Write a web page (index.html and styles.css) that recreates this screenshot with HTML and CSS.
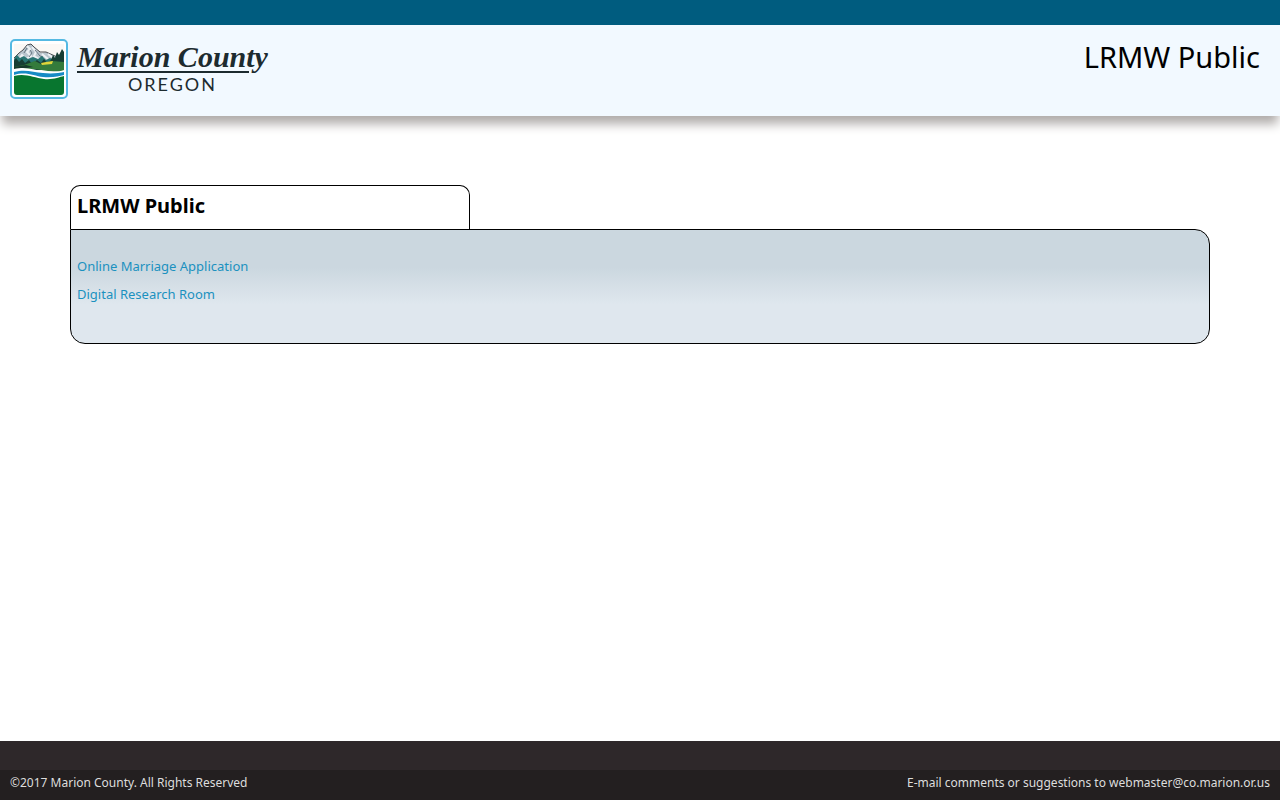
FILE: index.html
```html
<!DOCTYPE html>
<html lang="en">
<head>
  <meta charset="utf-8">
  <meta name="viewport" content="width=device-width, initial-scale=1">
  <title>LRMW Public</title>
  <link rel="stylesheet" href="styles.css">
</head>
<body>
  <header class="site-header">
    <div class="brand">
      <svg class="brand-mark" viewBox="0 0 58 60" aria-hidden="true">
        <rect x="1" y="1" width="56" height="58" rx="4" fill="#fff" stroke="#55b9e2" stroke-width="2"/>
        <path d="M4 5H54V36H4Z" fill="#fbf8f5"/>
        <path d="M4 19L9 14L13 11L17 6L21 5L25 9L31 14L36 13L44 17L53 22V31H4Z" fill="#b9c5ce"/>
        <path d="M4 19L9 14L13 11L17 6L21 5L24 8L30 13L36 13L45 17L52 20" fill="none" stroke="#4a4d51"/>
        <path d="M17 7L20 10L17 13L21 17L16 20L12 16L9 20M22 8L26 13L24 17L29 20M32 15L38 20M38 15L46 21" fill="none" stroke="#eef1f4" stroke-width="2"/>
        <path d="M17 9L14 14M20 11L22 14L19 18M25 11L30 17L33 18" fill="none" stroke="#687783"/>
        <path d="M4 20L7 16L10 19L14 17L18 20L23 18L28 20L32 17L36 21L40 19L44 21V31H4Z" fill="#287573"/>
        <path d="M4 22L6 19L9 23L12 20L15 24L19 21L22 25L27 21L31 24L34 20L37 24L41 21L43 16L45 19L47 13L49 16L52 10L54 13V31H4Z" fill="#173e34"/>
        <path d="M4 28L14 26L25 22L31 25L42 22L54 23V33L38 32L25 30L4 31Z" fill="#347b3b"/>
        <path d="M4 28L16 26L23 28L17 29L4 31Z" fill="#17392c"/>
        <path d="M31 24L36 23L43 22L42 25L32 26Z" fill="#ddd43b"/>
        <path d="M4 30C17 27 23 31 33 32C42 33 49 33 54 31V54H4Z" fill="#fff"/>
        <path d="M4 33C15 30 23 33 33 34C42 35 49 34 54 33V45H4Z" fill="#178bc5"/>
        <path d="M4 36C16 32 24 37 33 38C43 39 49 37 54 36V48H4Z" fill="#fff"/>
        <path d="M4 37C16 34 24 39 34 40C43 41 49 38 54 37V53Q54 56 51 56H7Q4 56 4 53Z" fill="#08762f"/>
      </svg>
      <div class="wordmark">
        <span class="county">Marion County</span>
        <span class="rule"></span>
        <span class="state">OREGON</span>
      </div>
    </div>
    <div class="app-title">LRMW Public</div>
  </header>

  <main class="content">
    <h1 class="tab">LRMW Public</h1>
    <nav class="panel" aria-label="LRMW Public">
      <a href="#marriage">Online Marriage Application</a>
      <a href="#research">Digital Research Room</a>
    </nav>
  </main>

  <footer class="site-footer">
    <div class="footer-bar">
      <span>©2017 Marion County. All Rights Reserved</span>
      <span>E-mail comments or suggestions to <a href="mailto:webmaster@co.marion.or.us">webmaster@co.marion.or.us</a></span>
    </div>
  </footer>
</body>
</html>
```

FILE: styles.css
```css
* {
  box-sizing: border-box;
}

body {
  display: flex;
  flex-direction: column;
  min-height: 100vh;
  margin: 0;
  background: #fff;
  color: #000;
  font-family: "Noto Sans", sans-serif;
  font-size: 13px;
  line-height: 20px;
}

.site-header {
  display: flex;
  justify-content: space-between;
  align-items: flex-start;
  padding: 14px 20px 17px 10px;
  border-top: 25px solid #005c7f;
  background: #f2f9ff;
  box-shadow: 0 10px 10px -2px #b0acaa;
}

.brand {
  display: flex;
  gap: 9px;
}

.brand-mark {
  display: block;
  width: 58px;
  height: 60px;
}

.wordmark {
  display: flex;
  flex-direction: column;
  padding-top: 3px;
  color: #1d2b2f;
}

.county {
  font: italic bold 30px/29px "Liberation Serif", serif;
}

.rule {
  height: 2px;
  margin-right: 19px;
  background: #1d2b2f;
}

.state {
  padding-top: 1px;
  font: 18px/20px Lato, sans-serif;
  letter-spacing: 2px;
  text-align: center;
}

.app-title {
  font-size: 29px;
  line-height: 36px;
}

.content {
  flex: 1;
  padding: 69px 70px 40px;
}

.tab {
  width: 400px;
  max-width: 100%;
  margin: 0;
  padding: 6px 6px 10px;
  border: 1px solid #000;
  border-bottom: 0;
  border-radius: 10px 10px 0 0;
  font-size: 20px;
  line-height: 27px;
}

.panel {
  display: flex;
  flex-direction: column;
  align-items: flex-start;
  gap: 8px;
  padding: 26px 6px 39px;
  border: 1px solid #000;
  border-radius: 0 15px 15px 15px;
  background: linear-gradient(#cbd7df 0%, #cbd7df 33%, #dfe7ee 66%, #dfe7ee 100%);
}

.panel a {
  color: #1b91bf;
  text-decoration: none;
}

.site-footer {
  padding-top: 29px;
  background: #2e282a;
}

.footer-bar {
  display: flex;
  flex-wrap: wrap;
  justify-content: space-between;
  padding: 3px 10px 7px;
  background: #231f20;
  color: #ddd;
  font-size: 12px;
}

.footer-bar a {
  color: inherit;
  text-decoration: none;
}
```
